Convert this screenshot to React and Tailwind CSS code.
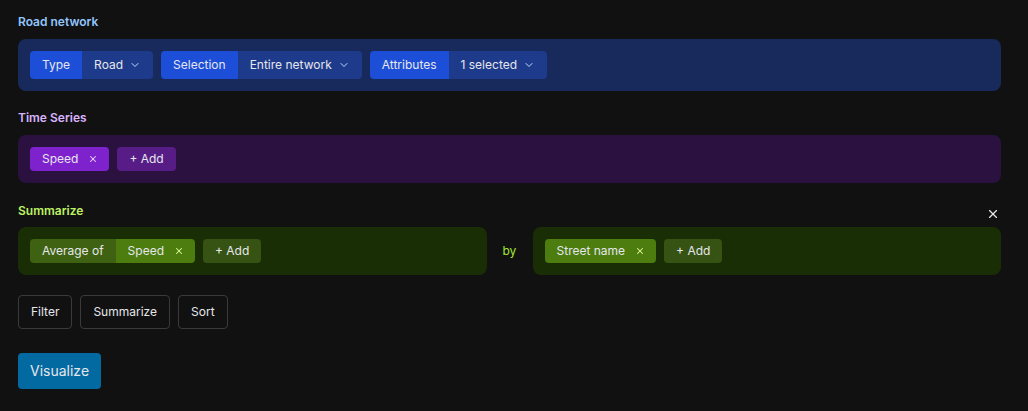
import React from 'react';
import { ChevronDown, X } from 'lucide-react';

const font = { fontFamily: 'Inter, "Noto Sans", sans-serif' };

// Two-part chip: label on the left, dropdown value on the right
const SplitSelect = ({ label, value }) => (
  <div className="flex h-7 rounded overflow-hidden text-xs text-gray-200">
    <div className="flex items-center px-3 bg-[#1d4ed8]">{label}</div>
    <div className="flex items-center gap-1.5 pl-3 pr-3 bg-[#1e3a8a]">
      <span>{value}</span>
      <ChevronDown size={12} strokeWidth={2} className="text-blue-200" />
    </div>
  </div>
);

const Tag = ({ label, className, xClass }) => (
  <div className={`flex items-center h-6 pl-3 pr-[11px] rounded text-xs text-gray-200 ${className}`}>
    <span>{label}</span>
    <X size={10} strokeWidth={2.5} className={`ml-[10px] ${xClass}`} />
  </div>
);

const AddButton = ({ className }) => (
  <button className={`flex items-center h-6 px-3 rounded text-xs text-gray-200 ${className}`}>
    + Add
  </button>
);

const App = () => {
  return (
    <div className="min-h-[411px] bg-[#111111] pl-[18px] pt-[14px] pb-5" style={font}>
      <div className="w-[983px]">
        {/* Road network */}
        <div className="text-xs font-semibold leading-4 text-[#93c5fd] mb-[9px]">Road network</div>
        <div className="flex gap-2 p-3 rounded-lg bg-[#182a5c]">
          <SplitSelect label="Type" value="Road" />
          <SplitSelect label="Selection" value="Entire network" />
          <SplitSelect label="Attributes" value="1 selected" />
        </div>

        {/* Time Series */}
        <div className="mt-[19px] text-xs font-semibold leading-4 text-[#d8b4fe] mb-[9px]">Time Series</div>
        <div className="flex gap-2 p-3 rounded-lg bg-[#2a1140]">
          <Tag label="Speed" className="bg-[#7e22ce]" xClass="text-purple-200" />
          <AddButton className="bg-[#581c87]" />
        </div>

        {/* Summarize */}
        <div className="mt-5 mb-2 flex items-center justify-between h-4">
          <div className="text-xs font-semibold leading-4 text-[#bef264]">Summarize</div>
          <button className="mr-[1px] mt-1.5 text-gray-200">
            <X size={14} strokeWidth={2} />
          </button>
        </div>
        <div className="flex items-center gap-4">
          <div className="flex-1 flex gap-2 p-3 rounded-lg bg-[#1a2e05]">
            <div className="flex h-6 rounded overflow-hidden text-xs text-gray-200">
              <div className="flex items-center px-3 bg-[#3f6212]">Average of</div>
              <div className="flex items-center pl-3 pr-[11px] bg-[#4d7c0f]">
                <span>Speed</span>
                <X size={10} strokeWidth={2.5} className="ml-[10px] text-lime-200" />
              </div>
            </div>
            <AddButton className="bg-[#365314]" />
          </div>
          <div className="w-[14px] text-xs text-[#a3e635]">by</div>
          <div className="flex-1 flex gap-2 p-3 rounded-lg bg-[#1a2e05]">
            <Tag label="Street name" className="bg-[#4d7c0f]" xClass="text-lime-200" />
            <AddButton className="bg-[#365314]" />
          </div>
        </div>

        {/* Actions */}
        <div className="mt-5 flex gap-2">
          {['Filter', 'Summarize', 'Sort'].map((b) => (
            <button
              key={b}
              className="h-[34px] px-3 rounded border border-[#3a3a3a] text-xs text-gray-200"
            >
              {b}
            </button>
          ))}
        </div>

        <button className="mt-6 h-9 px-3 rounded bg-[#0369a1] text-sm text-gray-200">
          Visualize
        </button>
      </div>
    </div>
  );
};

export default App;
